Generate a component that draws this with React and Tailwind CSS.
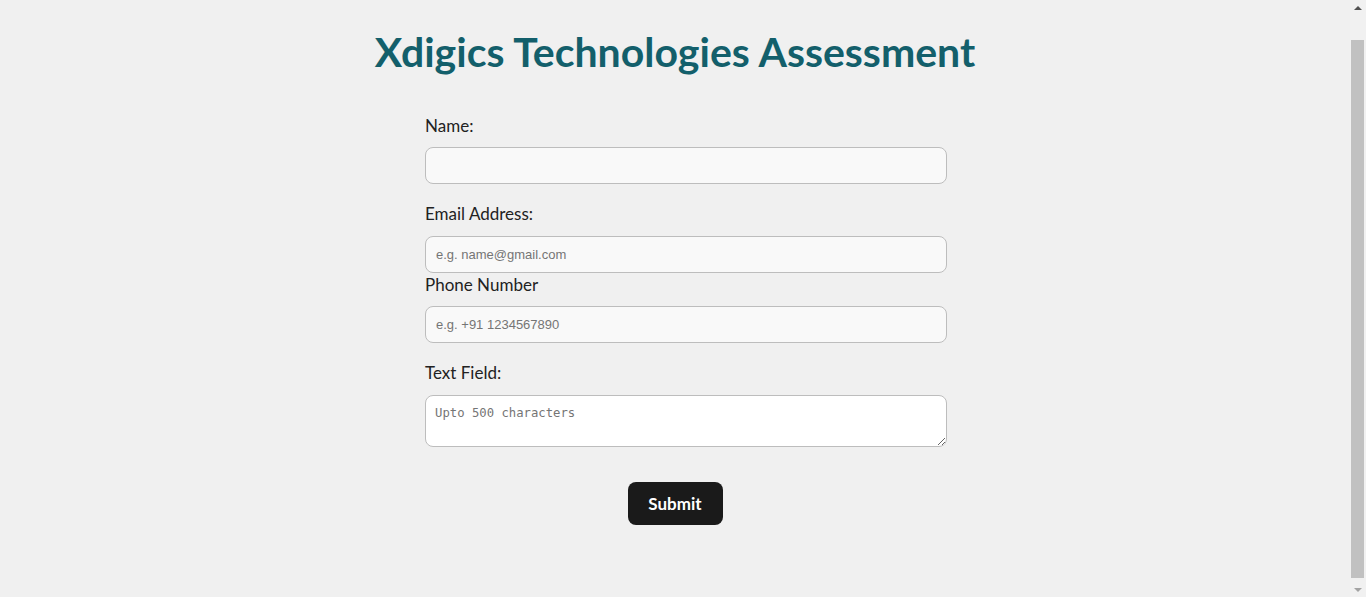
import React, { useState } from 'react';

const App = () => {
  const [name, setName] = useState('');
  const [email, setEmail] = useState('');
  const [phone, setPhone] = useState('');
  const [text, setText] = useState('');

  const inputClass =
    "block w-[522px] h-[37px] px-[10px] rounded-[8px] border border-[#bdbdbd] bg-[#f9f9f9] text-[13px] text-[#222] font-['Liberation_Sans',Arial,sans-serif] placeholder:text-[#757575] outline-none";
  const labelClass = "block h-[20px] leading-[20px] text-[17px] text-[#222]";

  return (
    <div className="flex h-[597px] bg-[#f0f0f0] font-['Lato','Trebuchet_MS',sans-serif]">
      <div className="flex-1">
        <h1 className="pt-[28px] text-center text-[41px] font-bold leading-[48px] text-[#135f6b]">
          Xdigics Technologies Assessment
        </h1>

        <form className="mx-auto mt-[40px] w-[500px]" onSubmit={(e) => e.preventDefault()}>
          <label className={labelClass}>Name:</label>
          <input
            type="text"
            value={name}
            onChange={(e) => setName(e.target.value)}
            className={`mt-[11px] ${inputClass}`}
          />

          <label className={`mt-[20px] ${labelClass}`}>Email Address:</label>
          <input
            type="email"
            value={email}
            onChange={(e) => setEmail(e.target.value)}
            placeholder="e.g. name@gmail.com"
            className={`mt-[12px] ${inputClass}`}
          />

          <label className={`mt-[2px] ${labelClass}`}>Phone Number</label>
          <input
            type="tel"
            value={phone}
            onChange={(e) => setPhone(e.target.value)}
            placeholder="e.g. +91 1234567890"
            className={`mt-[11px] ${inputClass}`}
          />

          <label className={`mt-[20px] ${labelClass}`}>Text Field:</label>
          <textarea
            value={text}
            maxLength={500}
            onChange={(e) => setText(e.target.value)}
            placeholder="Upto 500 characters"
            className="mt-[12px] block w-[522px] h-[52px] px-[9px] pt-[9px] pb-[8px] rounded-[8px] border border-[#bdbdbd] bg-white text-[12.25px] leading-[16px] text-[#222] font-['DejaVu_Sans_Mono',monospace] placeholder:text-[#757575] outline-none"
          />

          <div className="mt-[35px] flex justify-center">
            <button
              type="submit"
              className="h-[43px] w-[95px] rounded-[8px] bg-[#1a1a1a] text-[17px] font-bold text-white"
            >
              Submit
            </button>
          </div>
        </form>
      </div>

      {/* scrollbar strip as in the screenshot */}
      <div className="flex w-[16px] flex-col bg-[#f1f1f1]">
        <div className="flex h-[15px] w-full items-center justify-center">
          <div className="h-0 w-0 border-x-[4px] border-b-[4px] border-x-transparent border-b-[#505050]" />
        </div>
        <div className="mt-[25px] ml-[1px] w-[13px] flex-1 bg-[#c1c1c1]" />
        <div className="mt-[4px] flex h-[15px] w-full items-center justify-center">
          <div className="h-0 w-0 border-x-[4px] border-t-[4px] border-x-transparent border-t-[#a3a3a3]" />
        </div>
      </div>
    </div>
  );
};

export default App;
